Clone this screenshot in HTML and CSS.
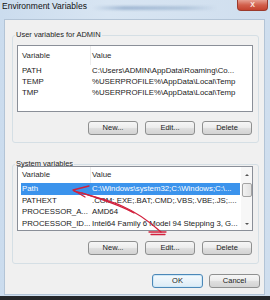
FILE: index.html
```html
<!DOCTYPE html>
<html>
<head>
<meta charset="utf-8">
<link rel="stylesheet" href="styles.css">
</head>
<body>
<div class="window">
  <div class="titlebar">
    <span class="title">Environment Variables</span>
    <div class="haze"></div>
    <div class="close">X</div>
  </div>
  <div class="client">
    <fieldset class="group g1">
      <legend>User variables for ADMIN</legend>
      <div class="list l1">
        <div class="hdr"><span class="c1 hc">Variable</span><span class="c2">Value</span></div>
        <div class="row"><span class="c1">PATH</span><span class="c2">C:\Users\ADMIN\AppData\Roaming\Co...</span></div>
        <div class="row"><span class="c1">TEMP</span><span class="c2">%USERPROFILE%\AppData\Local\Temp</span></div>
        <div class="row"><span class="c1">TMP</span><span class="c2">%USERPROFILE%\AppData\Local\Temp</span></div>
      </div>
      <div class="btns">
        <button class="btn">New...</button>
        <button class="btn">Edit...</button>
        <button class="btn">Delete</button>
      </div>
    </fieldset>
    <fieldset class="group g2">
      <legend>System variables</legend>
      <div class="list l2">
        <div class="lcontent">
          <div class="hdr h2"><span class="c1 hc">Variable</span><span class="c2">Value</span></div>
          <div class="row r2 sel"><span class="c1">Path</span><span class="c2">C:\Windows\system32;C:\Windows;C:\...</span></div>
          <div class="row r2"><span class="c1">PATHEXT</span><span class="c2">.COM;.EXE;.BAT;.CMD;.VBS;.VBE;.JS;....</span></div>
          <div class="row r2"><span class="c1">PROCESSOR_A...</span><span class="c2">AMD64</span></div>
          <div class="row r2"><span class="c1">PROCESSOR_ID...</span><span class="c2">Intel64 Family 6 Model 94 Stepping 3, G...</span></div>
        </div>
        <div class="sb">
          <div class="sbup"><span class="tri-up"></span></div>
          <div class="thumb"></div>
          <div class="sbfill"></div>
          <div class="sbdown"><span class="tri-down"></span></div>
        </div>
      </div>
      <div class="btns b2">
        <button class="btn">New...</button>
        <button class="btn">Edit...</button>
        <button class="btn">Delete</button>
      </div>
    </fieldset>
    <div class="footer">
      <button class="btn wide default">OK</button>
      <button class="btn wide">Cancel</button>
    </div>
  </div>
</div>
<svg class="arrow" width="270" height="300" viewBox="0 0 270 300">
  <path d="M73 190 L89 186 M73 190 L85 197" />
  <path d="M74 191 C 92 196 108 200 122 206 C 138 213 150 222 161 232" />
  <path d="M82 193 C 100 199 118 204 134 213" />
  <path d="M149 232 L166 232 M151 234.5 L165 234.5" />
</svg>
</body>
</html>
```
FILE: styles.css
```css
html, body {
  margin: 0;
  padding: 0;
}
body {
  width: 270px;
  height: 300px;
  overflow: hidden;
  position: relative;
  background: linear-gradient(#3a3c3f, #25272a);
  font-family: "Liberation Sans", Arial, sans-serif;
  color: #1a1a1a;
}
.window {
  height: 296px;
  display: flex;
  flex-direction: column;
  background: linear-gradient(90deg, #cbdcee, #d8e5f2 40%, #cfdeee);
}
.titlebar {
  height: 19px;
  display: flex;
  align-items: flex-start;
  flex: none;
}
.title {
  font-size: 8.5px;
  line-height: 12px;
  padding-left: 2px;
  color: #111;
  white-space: nowrap;
}
.haze {
  flex: 1;
  height: 4px;
  margin: 6px 20px 0 6px;
  background: linear-gradient(90deg, rgba(150,175,205,0), rgba(150,175,205,0.8) 25%, rgba(165,187,212,0.7) 75%, rgba(150,175,205,0));
  filter: blur(1.2px);
}
.close {
  width: 31px;
  height: 11px;
  margin-right: 2px;
  box-sizing: border-box;
  border: 1px solid #9b3a2c;
  border-top: none;
  border-radius: 0 0 4px 4px;
  background: linear-gradient(#e6a092, #d2604c 50%, #c4432f);
  color: #fbeae6;
  font-size: 7px;
  font-weight: bold;
  line-height: 10px;
  text-align: center;
}
.client {
  flex: 1;
  margin: 0 5px 1px 4px;
  background: #f0f0f0;
  border: 1px solid #b3c4d6;
  display: flex;
  flex-direction: column;
}
.group {
  margin: 10px 0 0 7px;
  width: 247px;
  min-width: 0;
  box-sizing: border-box;
  padding: 0 4px 7px 4px;
  border: 1px solid #d5dfe5;
  border-radius: 3px;
}
.group legend {
  font-size: 7.5px;
  line-height: 10px;
  padding: 0 1px;
  margin-left: -2px;
  color: #1e1e1e;
}
.g2 {
  margin-top: 16px;
  padding-bottom: 8px;
}
.list {
  width: 236px;
  box-sizing: border-box;
  border: 1px solid #8a8f98;
  background: #fff;
  font-size: 7.8px;
}
.l1 {
  margin-top: 5px;
  height: 67px;
}
.l2 {
  margin-top: -3px;
  height: 65px;
  display: flex;
}
.lcontent {
  flex: 1;
  min-width: 0;
}
.hdr {
  display: flex;
  height: 19px;
  line-height: 19px;
  margin-left: 3px;
  color: #2a2a2a;
}
.h2 {
  height: 16px;
  line-height: 16px;
}
.hc {
  border-right: 1px solid #ececec;
}
.row {
  display: flex;
  height: 11px;
  line-height: 11px;
  margin: 0 1px 0 3px;
}
.r2 {
  height: 11.5px;
  line-height: 11.5px;
}
.c1 {
  width: 70px;
  flex: none;
  box-sizing: border-box;
  padding-left: 1px;
  white-space: nowrap;
  overflow: hidden;
}
.c2 {
  flex: 1;
  min-width: 0;
  padding-left: 1px;
  white-space: nowrap;
  overflow: hidden;
}
.sel {
  background: #3b93ec;
  color: #fff;
}
.sb {
  width: 11px;
  flex: none;
  display: flex;
  flex-direction: column;
  background: #f7f7f7;
}
.sbup {
  height: 16px;
  display: flex;
  justify-content: center;
  align-items: center;
}
.sbdown {
  height: 13px;
  display: flex;
  justify-content: center;
  align-items: center;
}
.tri-up {
  width: 0;
  height: 0;
  border-left: 2px solid transparent;
  border-right: 2px solid transparent;
  border-bottom: 2.5px solid #555;
}
.tri-down {
  width: 0;
  height: 0;
  border-left: 2px solid transparent;
  border-right: 2px solid transparent;
  border-top: 2.5px solid #555;
}
.thumb {
  height: 14px;
  margin: 0 0 0 1px;
  box-sizing: border-box;
  border: 1px solid #a4a4a4;
  border-radius: 2px;
  background: linear-gradient(90deg, #f2f2f2, #e2e2e2);
}
.sbfill {
  flex: 1;
}
.btns {
  display: flex;
  justify-content: flex-end;
  gap: 7px;
  margin-top: 9px;
  margin-right: 2px;
}
.b2 {
  margin-top: 10px;
}
.btn {
  width: 50px;
  height: 14px;
  box-sizing: border-box;
  padding: 0;
  border: 1px solid #8f9090;
  border-radius: 3px;
  background: linear-gradient(#f6f6f6, #ededed 45%, #dedede 55%, #d3d3d3);
  font-family: "Liberation Sans", Arial, sans-serif;
  font-size: 7.5px;
  line-height: 12px;
  color: #222;
}
.footer {
  display: flex;
  justify-content: flex-end;
  gap: 6px;
  margin-top: 10px;
  padding-right: 4px;
}
.wide {
  width: 51px;
}
.default {
  border-color: #4c88b8;
  background: linear-gradient(#f5fafd, #e9f3fa 50%, #dcebf6);
  box-shadow: inset 0 0 0 1px #cfe8f7;
}
.arrow {
  position: absolute;
  left: 0;
  top: 0;
  pointer-events: none;
  fill: none;
  stroke: #d2203c;
  stroke-width: 1.3;
  stroke-linecap: round;
}
```
